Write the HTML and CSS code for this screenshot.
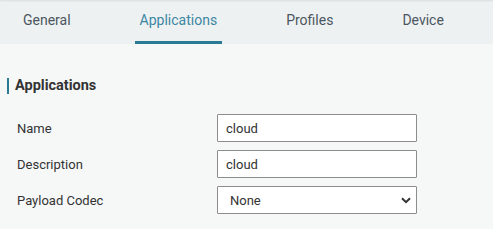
FILE: index.html
```html
<!DOCTYPE html>
<html lang="en">
<head>
  <meta charset="UTF-8">
  <title>Applications</title>
  <link rel="stylesheet" href="styles.css">
</head>
<body>
  <div class="tabs">
    <div class="tab">General</div>
    <div class="tab active">Applications</div>
    <div class="tab">Profiles</div>
    <div class="tab">Device</div>
  </div>

  <div class="content">
    <h2 class="section-title">Applications</h2>

    <div class="form-row">
      <label>Name</label>
      <input type="text" class="field" value="cloud">
    </div>

    <div class="form-row">
      <label>Description</label>
      <input type="text" class="field" value="cloud">
    </div>

    <div class="form-row">
      <label>Payload Codec</label>
      <div class="select-wrap">
        <select class="field select">
          <option>None</option>
        </select>
        <svg class="chevron" width="10" height="7" viewBox="0 0 10 7">
          <path d="M1 1.2 L5 5.2 L9 1.2" fill="none" stroke="#333" stroke-width="2"/>
        </svg>
      </div>
    </div>
  </div>
</body>
</html>
```

FILE: styles.css
```css
body {
  margin: 0;
  font-family: Roboto, "Liberation Sans", Arial, sans-serif;
  background: #f6f8f8;
  color: #333;
}

.tabs {
  display: flex;
  gap: 59px;
  padding-left: 18px;
  height: 44px;
  background: #eef1f2;
  box-shadow: inset 0 2px 2px -1px rgba(0,0,0,0.08);
}

.tab {
  padding: 0 5px;
  font-size: 14px;
  line-height: 41px;
  color: #4b5660;
  border-bottom: 3px solid transparent;
}

.tab.active {
  color: #3b87a3;
  border-bottom-color: #2b7a93;
}

.content {
  padding: 34px 0 0 7px;
}

.section-title {
  margin: 0 0 20px;
  border-left: 2px solid #2b7a93;
  padding-left: 6px;
  font-size: 14.5px;
  line-height: 16px;
  color: #333;
}

.form-row {
  display: flex;
  align-items: center;
  margin-bottom: 8px;
  padding-left: 10px;
}

.form-row label {
  width: 200px;
  font-size: 13px;
}

.field {
  box-sizing: border-box;
  width: 200px;
  height: 28px;
  margin: 0;
  padding: 0 8px;
  border: 1px solid #8c8c8c;
  border-radius: 1px;
  background: white;
  font-family: inherit;
  font-size: 13px;
  color: #333;
}

.select-wrap {
  position: relative;
}

.select {
  appearance: none;
  padding-left: 12px;
  display: block;
}

.chevron {
  position: absolute;
  right: 6px;
  top: 11px;
  pointer-events: none;
}
```
